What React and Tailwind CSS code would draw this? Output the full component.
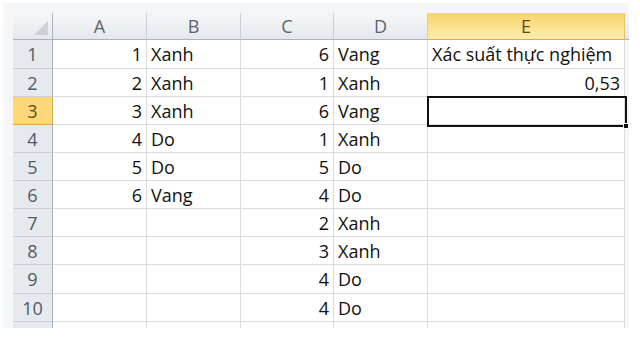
import React from 'react';

const cols = ['A', 'B', 'C', 'D', 'E'];

const rows = [
  { n: 1, a: '1', b: 'Xanh', c: '6', d: 'Vang', e: 'Xác suất thực nghiệm' },
  { n: 2, a: '2', b: 'Xanh', c: '1', d: 'Xanh', e: '0,53', eNum: true },
  { n: 3, a: '3', b: 'Xanh', c: '6', d: 'Vang' },
  { n: 4, a: '4', b: 'Do', c: '1', d: 'Xanh' },
  { n: 5, a: '5', b: 'Do', c: '5', d: 'Do' },
  { n: 6, a: '6', b: 'Vang', c: '4', d: 'Do' },
  { n: 7, c: '2', d: 'Xanh' },
  { n: 8, c: '3', d: 'Xanh' },
  { n: 9, c: '4', d: 'Do' },
  { n: 10, c: '4', d: 'Do' },
];

const heights = ['h-[29px]', 'h-[28px]', 'h-[28px]', 'h-[28px]', 'h-[28px]', 'h-[28px]', 'h-[28px]', 'h-[28px]', 'h-[29px]', 'h-[28px]'];

const Cell = ({ children, num, className = '' }) => (
  <div
    className={`bg-white border-r border-b border-[#dadcdd] flex items-center overflow-visible whitespace-nowrap text-[#111] ${
      num ? 'justify-end pr-[4px]' : 'pl-[4px]'
    } ${className}`}
  >
    {children}
  </div>
);

export default function App() {
  return (
    <div className="w-[640px] h-[341px] bg-white pt-[3px] pl-[3px]" style={{ fontFamily: '"Open Sans", "Noto Sans", sans-serif' }}>
      <div className="w-[626px] h-[325px] bg-[#f5f6f7] pt-[10px] pl-[10px] overflow-hidden">
        <div className="relative w-[616px] text-[18px] leading-none">
          <div className="grid grid-cols-[40px_94px_94px_93px_94px_197px_6px]">
            {/* header row */}
            <div className="h-[27px] bg-gradient-to-b from-[#f6f7f9] to-[#e4e8ed] border-r border-b border-[#a9b3bf] relative">
              <svg className="absolute right-[4px] bottom-[4px]" width="14" height="14" viewBox="0 0 14 14">
                <polygon points="14,0 14,14 0,14" fill="#cdd1d6" />
              </svg>
            </div>
            {cols.map((c) => (
              <div
                key={c}
                className={`h-[27px] flex items-center justify-center border-r border-b ${
                  c === 'E'
                    ? 'bg-gradient-to-b from-[#f9d66a] to-[#fcecab] border-[#e9c15c] border-b-[#d9a94a] text-[#5c4a1e]'
                    : 'bg-gradient-to-b from-[#f6f7f9] to-[#e4e8ed] border-r-[#c9cfd6] border-b-[#a9b3bf] text-[#5a6470]'
                }`}
              >
                {c}
              </div>
            ))}
            <div className="h-[27px] bg-gradient-to-b from-[#f6f7f9] to-[#e4e8ed] border-b border-[#a9b3bf]" />

            {rows.map((r, i) => (
              <React.Fragment key={r.n}>
                <div
                  className={`${heights[i]} flex items-center justify-center border-r border-b ${
                    r.n === 3
                      ? 'bg-[#fcd878] border-r-[#d9a94a] border-b-[#e2a43c] text-[#5c4a1e]'
                      : 'bg-[#e6e9ed] border-r-[#a9b3bf] border-b-[#c9cfd6] text-[#505b68]'
                  }`}
                >
                  {r.n}
                </div>
                <Cell num className={heights[i]}>{r.a}</Cell>
                <Cell className={heights[i]}>{r.b}</Cell>
                <Cell num className={heights[i]}>{r.c}</Cell>
                <Cell className={heights[i]}>{r.d}</Cell>
                <Cell num={r.eNum} className={heights[i]}>{r.e}</Cell>
                <div className={`${heights[i]} bg-[#f5f6f7]`} />
              </React.Fragment>
            ))}

            {/* partial row at the bottom */}
            <div className="h-[6px] bg-[#e6e9ed] border-r border-[#a9b3bf]" />
            <div className="h-[6px] bg-white border-r border-[#dadcdd]" />
            <div className="h-[6px] bg-white border-r border-[#dadcdd]" />
            <div className="h-[6px] bg-white border-r border-[#dadcdd]" />
            <div className="h-[6px] bg-white border-r border-[#dadcdd]" />
            <div className="h-[6px] bg-white border-r border-[#dadcdd]" />
            <div className="h-[6px]" />
          </div>

          {/* active cell E3 */}
          <div className="absolute left-[414px] top-[83px] w-[200px] h-[31px] border-[2.5px] border-[#111] pointer-events-none">
            <div className="absolute -right-[4px] -bottom-[4px] w-[6px] h-[6px] bg-[#111] border border-white" />
          </div>
        </div>
      </div>
    </div>
  );
}
